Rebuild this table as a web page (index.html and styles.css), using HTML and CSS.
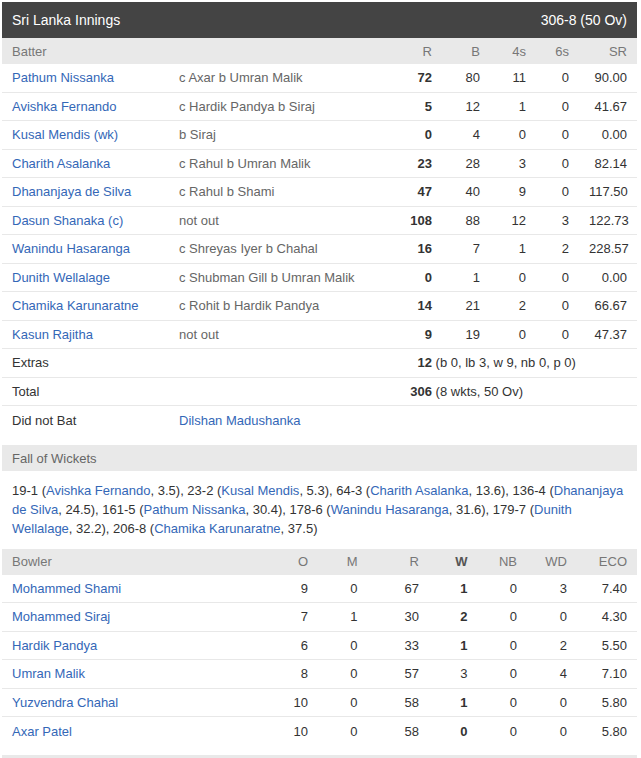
FILE: index.html
```html
<!DOCTYPE html>
<html>
<head>
<meta charset="utf-8">
<title>Sri Lanka Innings</title>
<link rel="stylesheet" href="styles.css">
</head>
<body>
<div class="card">
  <div class="inn-head"><span>Sri Lanka Innings</span><span>306-8 (50 Ov)</span></div>

  <div class="row bat head">
    <div class="cell">Batter</div><div class="cell"></div>
    <div class="cell num">R</div><div class="cell num">B</div><div class="cell num">4s</div><div class="cell num">6s</div><div class="cell num">SR</div>
  </div>

  <div class="row bat">
    <div class="cell link">Pathum Nissanka</div><div class="cell dis">c Axar b Umran Malik</div>
    <div class="cell num b">72</div><div class="cell num">80</div><div class="cell num">11</div><div class="cell num">0</div><div class="cell num">90.00</div>
  </div>
  <div class="row bat">
    <div class="cell link">Avishka Fernando</div><div class="cell dis">c Hardik Pandya b Siraj</div>
    <div class="cell num b">5</div><div class="cell num">12</div><div class="cell num">1</div><div class="cell num">0</div><div class="cell num">41.67</div>
  </div>
  <div class="row bat">
    <div class="cell link">Kusal Mendis (wk)</div><div class="cell dis">b Siraj</div>
    <div class="cell num b">0</div><div class="cell num">4</div><div class="cell num">0</div><div class="cell num">0</div><div class="cell num">0.00</div>
  </div>
  <div class="row bat">
    <div class="cell link">Charith Asalanka</div><div class="cell dis">c Rahul b Umran Malik</div>
    <div class="cell num b">23</div><div class="cell num">28</div><div class="cell num">3</div><div class="cell num">0</div><div class="cell num">82.14</div>
  </div>
  <div class="row bat">
    <div class="cell link">Dhananjaya de Silva</div><div class="cell dis">c Rahul b Shami</div>
    <div class="cell num b">47</div><div class="cell num">40</div><div class="cell num">9</div><div class="cell num">0</div><div class="cell num">117.50</div>
  </div>
  <div class="row bat">
    <div class="cell link">Dasun Shanaka (c)</div><div class="cell dis">not out</div>
    <div class="cell num b">108</div><div class="cell num">88</div><div class="cell num">12</div><div class="cell num">3</div><div class="cell num">122.73</div>
  </div>
  <div class="row bat">
    <div class="cell link">Wanindu Hasaranga</div><div class="cell dis">c Shreyas Iyer b Chahal</div>
    <div class="cell num b">16</div><div class="cell num">7</div><div class="cell num">1</div><div class="cell num">2</div><div class="cell num">228.57</div>
  </div>
  <div class="row bat">
    <div class="cell link">Dunith Wellalage</div><div class="cell dis">c Shubman Gill b Umran Malik</div>
    <div class="cell num b">0</div><div class="cell num">1</div><div class="cell num">0</div><div class="cell num">0</div><div class="cell num">0.00</div>
  </div>
  <div class="row bat">
    <div class="cell link">Chamika Karunaratne</div><div class="cell dis">c Rohit b Hardik Pandya</div>
    <div class="cell num b">14</div><div class="cell num">21</div><div class="cell num">2</div><div class="cell num">0</div><div class="cell num">66.67</div>
  </div>
  <div class="row bat">
    <div class="cell link">Kasun Rajitha</div><div class="cell dis">not out</div>
    <div class="cell num b">9</div><div class="cell num">19</div><div class="cell num">0</div><div class="cell num">0</div><div class="cell num">47.37</div>
  </div>

  <div class="row bat">
    <div class="cell wide">Extras</div>
    <div class="cell summary"><span class="sum-num">12</span> (b 0, lb 3, w 9, nb 0, p 0)</div>
  </div>
  <div class="row bat">
    <div class="cell wide">Total</div>
    <div class="cell summary"><span class="sum-num">306</span> (8 wkts, 50 Ov)</div>
  </div>
  <div class="row bat dnb">
    <div class="cell">Did not Bat</div><div class="cell link span-rest">Dilshan Madushanka</div>
  </div>

  <div class="section-head">Fall of Wickets</div>
  <div class="fow"><span>19-1 (</span><span class="blue">Avishka Fernando</span><span>, 3.5), 23-2 (</span><span class="blue">Kusal Mendis</span><span>, 5.3), 64-3 (</span><span class="blue">Charith Asalanka</span><span>, 13.6), 136-4 (</span><span class="blue">Dhananjaya</span> <span class="blue">de Silva</span><span>, 24.5), 161-5 (</span><span class="blue">Pathum Nissanka</span><span>, 30.4), 178-6 (</span><span class="blue">Wanindu Hasaranga</span><span>, 31.6), 179-7 (</span><span class="blue">Dunith</span> <span class="blue">Wellalage</span><span>, 32.2), 206-8 (</span><span class="blue">Chamika Karunaratne</span><span>, 37.5)</span></div>

  <div class="row bowl head">
    <div class="cell">Bowler</div>
    <div class="cell num">O</div><div class="cell num">M</div><div class="cell num">R</div><div class="cell num b dk">W</div><div class="cell num">NB</div><div class="cell num">WD</div><div class="cell num">ECO</div>
  </div>
  <div class="row bowl">
    <div class="cell link">Mohammed Shami</div>
    <div class="cell num">9</div><div class="cell num">0</div><div class="cell num">67</div><div class="cell num b">1</div><div class="cell num">0</div><div class="cell num">3</div><div class="cell num">7.40</div>
  </div>
  <div class="row bowl">
    <div class="cell link">Mohammed Siraj</div>
    <div class="cell num">7</div><div class="cell num">1</div><div class="cell num">30</div><div class="cell num b">2</div><div class="cell num">0</div><div class="cell num">0</div><div class="cell num">4.30</div>
  </div>
  <div class="row bowl">
    <div class="cell link">Hardik Pandya</div>
    <div class="cell num">6</div><div class="cell num">0</div><div class="cell num">33</div><div class="cell num b">1</div><div class="cell num">0</div><div class="cell num">2</div><div class="cell num">5.50</div>
  </div>
  <div class="row bowl">
    <div class="cell link">Umran Malik</div>
    <div class="cell num">8</div><div class="cell num">0</div><div class="cell num">57</div><div class="cell num">3</div><div class="cell num">0</div><div class="cell num">4</div><div class="cell num">7.10</div>
  </div>
  <div class="row bowl">
    <div class="cell link">Yuzvendra Chahal</div>
    <div class="cell num">10</div><div class="cell num">0</div><div class="cell num">58</div><div class="cell num b">1</div><div class="cell num">0</div><div class="cell num">0</div><div class="cell num">5.80</div>
  </div>
  <div class="row bowl last">
    <div class="cell link">Axar Patel</div>
    <div class="cell num">10</div><div class="cell num">0</div><div class="cell num">58</div><div class="cell num b">0</div><div class="cell num">0</div><div class="cell num">0</div><div class="cell num">5.80</div>
  </div>
</div>
<div class="next-head"></div>
</body>
</html>
```

FILE: styles.css
```css
html, body {
  margin: 0;
  padding: 0;
  background: #fff;
}
body {
  font-family: "Liberation Sans", Arial, sans-serif;
  font-size: 13px;
  color: #333;
}
.card {
  width: 635px;
  margin: 2px 0 0 2px;
}
.inn-head {
  height: 36px;
  background: #444;
  color: #fff;
  font-size: 14px;
  display: flex;
  align-items: center;
  justify-content: space-between;
  padding: 0 10px;
  box-sizing: border-box;
}
.row {
  display: grid;
  height: 28.5px;
  box-sizing: border-box;
  border-bottom: 1px solid #e8e8e8;
  align-items: center;
}
.row.bat {
  grid-template-columns: 167px 231px 42px 48px 46px 43px 58px;
}
.row.bowl {
  grid-template-columns: 266px 50px 49.5px 61.5px 48.5px 49.5px 50px 60px;
}
.row.head {
  height: 26px;
  background: #e9e9e9;
  color: #777;
  border-bottom: none;
}
.cell {
  padding: 0 10px;
  white-space: nowrap;
}
.num {
  text-align: right;
}
.b {
  font-weight: bold;
}
.dk {
  color: #555;
}
.link, .blue {
  color: #3467b7;
}
.dis {
  color: #666;
}
.wide {
  grid-column: 1 / 3;
}
.summary {
  grid-column: 3 / -1;
  padding: 0;
}
.sum-num {
  display: inline-block;
  width: 32px;
  text-align: right;
  font-weight: bold;
}
.span-rest {
  grid-column: 2 / -1;
}
.row.dnb {
  border-bottom: none;
  margin-bottom: 10.5px;
}
.section-head {
  height: 26px;
  background: #e9e9e9;
  color: #666;
  display: flex;
  align-items: center;
  padding: 0 10px;
}
.fow {
  padding: 10px 10px 10.5px;
  line-height: 19px;
}
.row.last {
  border-bottom: none;
}
.next-head {
  width: 635px;
  margin: 9px 0 0 2px;
  height: 20px;
  background: #e9e9e9;
}
```
